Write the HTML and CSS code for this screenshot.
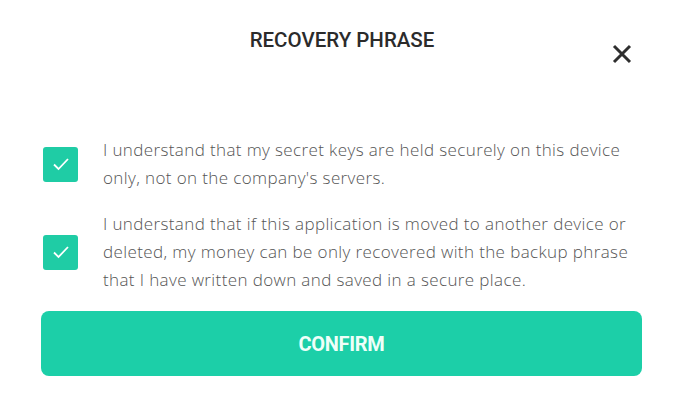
FILE: index.html
```html
<!DOCTYPE html>
<html>
<head>
<meta charset="utf-8">
<link rel="stylesheet" href="styles.css">
</head>
<body>
<div class="modal">
  <div class="header">
    <h1 class="title">RECOVERY PHRASE</h1>
    <button class="close" aria-label="Close">
      <svg width="20" height="20" viewBox="0 0 20 20"><path d="M2 2 L18 18 M18 2 L2 18" stroke="#2f2f2f" stroke-width="3" stroke-linecap="butt"/></svg>
    </button>
  </div>
  <div class="items">
    <label class="item">
      <span class="box"><svg width="18" height="14" viewBox="0 0 18 14"><path d="M2 7.5 L6.5 12 L16 2" fill="none" stroke="#fff" stroke-width="1.8"/></svg></span>
      <span class="text">I understand that my secret keys are held securely on this device only, not on the company's servers.</span>
    </label>
    <label class="item">
      <span class="box"><svg width="18" height="14" viewBox="0 0 18 14"><path d="M2 7.5 L6.5 12 L16 2" fill="none" stroke="#fff" stroke-width="1.8"/></svg></span>
      <span class="text">I understand that if this application is moved to another device or deleted, my money can be only recovered with the backup phrase that I have written down and saved in a secure place.</span>
    </label>
  </div>
  <button class="confirm">CONFIRM</button>
</div>
</body>
</html>
```
FILE: styles.css
```css
* { box-sizing: border-box; }
body { margin: 0; background: #fff; font-family: "Open Sans", "Lato", sans-serif; }
.modal { width: 686px; height: 418px; padding: 0 44px 0 42px; display: flex; flex-direction: column; }
.header { position: relative; height: 110px; }
.title { margin: 0; padding-top: 28px; text-align: center; font-family: Roboto, sans-serif; font-weight: 500; font-size: 20.5px; color: #2b2b2b; letter-spacing: 0; }
.close { position: absolute; right: 10px; top: 44px; border: 0; background: none; padding: 0; width: 20px; height: 20px; }
.close svg { display: block; }
.items { display: flex; flex-direction: column; gap: 18px; padding-top: 26px; }
.item { display: flex; align-items: center; gap: 25px; }
.box { flex: none; width: 35px; height: 35px; border-radius: 3px; background: #1fcca5; display: flex; align-items: center; justify-content: center; margin-left: 1px; }
.text { font-size: 17px; font-weight: 300; line-height: 28px; color: #555; max-width: 540px; letter-spacing: 0.38px; }
.confirm { margin-top: 17px; height: 65px; width: 601px; margin-left: -1px; border: 0; border-radius: 8px; background: #1ccfa8; color: #effff9; font-family: Roboto, sans-serif; font-weight: 700; font-size: 20px; letter-spacing: -0.3px; }
```
